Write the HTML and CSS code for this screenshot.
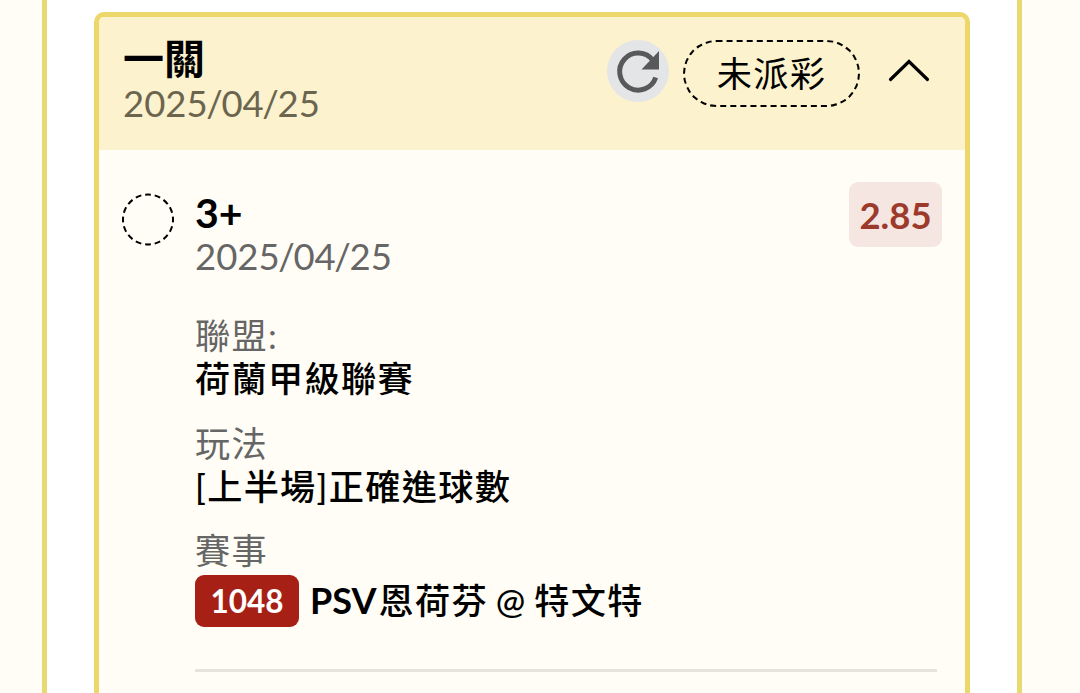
FILE: index.html
```
<!DOCTYPE html>
<html lang="zh-Hant">
<head>
  <meta charset="UTF-8" />
  <meta name="viewport" content="width=device-width, initial-scale=1.0"/>
  <title>投注紀錄</title>
  <link rel="stylesheet" href="styles.css">
</head>
<body>
  <div class="panel">
    <div class="bet-card">
      <div class="card-header">
        <div class="header-text">
          <h2>一關</h2>
          <div class="date">2025<span class="slash">/</span>04<span class="slash">/</span>25</div>
        </div>
        <button type="button" class="refresh-button" aria-label="重新整理">
          <svg width="62" height="62" viewBox="0 0 62 62">
            <path d="M46 20.500A18.500 18.500 0 1 0 48.700 37.500" fill="none" stroke="#58595b" stroke-width="5"/>
            <path d="M52 11V29.500H34.500Z" fill="#58595b"/>
          </svg>
        </button>
        <span class="status">未派彩</span>
        <button type="button" class="toggle-button" aria-label="收合">
          <svg width="42" height="26" viewBox="0 0 42 26">
            <path d="M2.500 21.500L21 3.500L39.500 21.500" fill="none" stroke="#000" stroke-width="3.200" stroke-linecap="round"/>
          </svg>
        </button>
      </div>
      <div class="card-body">
        <svg class="pending-icon" width="54" height="54" viewBox="0 0 54 54">
          <circle cx="27" cy="27.500" r="25" pathLength="160" fill="none" stroke="#000" stroke-width="2" stroke-dasharray="6 4" stroke-dashoffset="3"/>
        </svg>
        <div class="bet-detail">
          <div class="bet-top">
            <div>
              <h3>3+</h3>
              <div class="date">2025<span class="slash">/</span>04<span class="slash">/</span>25</div>
            </div>
            <span class="odds">2.85</span>
          </div>
          <div class="info-group">
            <div class="label">聯盟:</div>
            <div class="value">荷蘭甲級聯賽</div>
          </div>
          <div class="info-group">
            <div class="label">玩法</div>
            <div class="value">[上半場]正確進球數</div>
          </div>
          <div class="info-group">
            <div class="label">賽事</div>
            <div class="value match">
              <span class="match-id">1048</span>
              <span class="teams"><b>PSV</b>恩荷芬 @ 特文特</span>
            </div>
          </div>
        </div>
      </div>
    </div>
  </div>
</body>
</html>
```
FILE: styles.css
```
* {
  box-sizing: border-box;
}
body {
  margin: 0;
  height: 100vh;
  overflow: hidden;
  background-color: #fffdf5;
  font-family: Lato, "Noto Sans CJK TC", sans-serif;
  font-size: 36.5px;
  line-height: 43px;
  color: #000;
}
h2, h3 {
  margin: 0;
  font-size: 41px;
  font-weight: 700;
}
h3 {
  line-height: 42px;
  margin-bottom: 1px;
}
button {
  padding: 0;
  border: none;
  background: none;
  cursor: pointer;
}
svg {
  display: block;
}
.panel {
  height: 100vh;
  margin: 0 58px 0 42px;
  padding: 12px 47px 0;
  border: solid #e8da72;
  border-width: 0 5px;
  background-color: #fff;
}
.bet-card {
  height: 100%;
  border: 5px solid #edd76b;
  border-bottom: none;
  border-radius: 10px 10px 0 0;
  background-color: #fffdf5;
  overflow: hidden;
}
.card-header {
  display: flex;
  align-items: flex-start;
  height: 133px;
  padding: 19px 35px 0 24px;
  background-color: #fcf2ce;
}
.header-text {
  flex: 1;
  line-height: 45px;
}
.date {
  color: #666;
}
.card-header .date {
  color: #6b6550;
}
.slash {
  margin: 0 -1.4px;
}
.refresh-button {
  width: 62px;
  height: 62px;
  margin-top: 4px;
  border-radius: 50%;
  background-color: #e4e5e7;
}
.status, .label, .value {
  font-size: 35.2px;
  letter-spacing: 1.3px;
}
.status {
  width: 177px;
  height: 67px;
  margin: 4px 28px 0 14px;
  border: 2px dashed #000;
  border-radius: 34px;
  line-height: 62px;
  text-align: center;
}
.toggle-button {
  margin-top: 22px;
}
.card-body {
  display: flex;
  align-items: flex-start;
  padding: 42px 28px 0 22px;
}
.pending-icon {
  flex: none;
  margin-right: 20px;
}
.bet-detail {
  flex: 1;
  padding-bottom: 42px;
  border-bottom: 3px solid #e6e2dc;
}
.bet-top {
  display: flex;
  justify-content: space-between;
  align-items: flex-start;
  margin-bottom: 36px;
}
.odds {
  width: 93px;
  height: 65px;
  margin: -10px -5px 0 0;
  border-radius: 9px;
  background-color: #f5e6e1;
  color: #9c3a2c;
  font-weight: 700;
  line-height: 67px;
  text-align: center;
}
.info-group {
  margin-bottom: 22px;
}
.info-group:last-child {
  margin-top: -1px;
  margin-bottom: 0;
}
.label {
  color: #666;
}
.value {
  font-weight: 500;
}
.match {
  display: flex;
  align-items: flex-start;
  gap: 11px;
  padding-top: 3px;
}
.match-id {
  width: 104px;
  height: 52px;
  border-radius: 9px;
  background-color: #a62015;
  color: #fff;
  font-size: 31.5px;
  font-weight: 700;
  letter-spacing: 0;
  line-height: 52px;
  text-align: center;
}
.teams {
  line-height: 50px;
  white-space: nowrap;
  word-spacing: -2.5px;
}
.teams b {
  margin-right: 2px;
  font-size: 36px;
  letter-spacing: 0;
}
```
